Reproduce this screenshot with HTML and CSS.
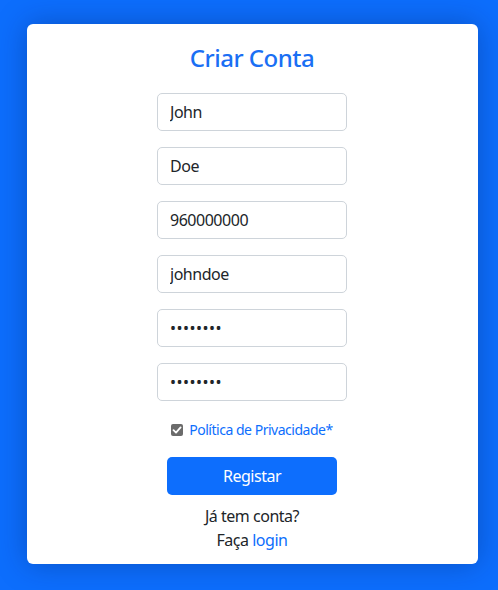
FILE: index.html
```html
<!DOCTYPE html>
<html lang="pt">
<head>
<meta charset="utf-8">
<title>Criar Conta</title>
<link rel="stylesheet" href="styles.css">
</head>
<body>
<main class="card">
  <h1 class="title">Criar Conta</h1>
  <form class="form">
    <input class="field" type="text" value="John">
    <input class="field" type="text" value="Doe">
    <input class="field" type="text" value="960000000">
    <input class="field" type="text" value="johndoe">
    <input class="field" type="password" value="12345678">
    <input class="field" type="password" value="12345678">
    <label class="check">
      <span class="box"><svg width="10" height="10" viewBox="0 0 10 10"><path d="M1.5 5.2 L4 7.6 L8.6 2.4" fill="none" stroke="#fff" stroke-width="1.8" stroke-linecap="round" stroke-linejoin="round"/></svg></span>
      <a class="link" href="#">Política de Privacidade*</a>
    </label>
    <button class="btn" type="button">Registar</button>
  </form>
  <p class="foot">Já tem conta?<br>Faça <a class="link" href="#">login</a></p>
</main>
</body>
</html>
```
FILE: styles.css
```css
html, body {
  margin: 0;
  padding: 0;
}
body {
  background: #0d6efd;
  font-family: "Noto Sans", "Segoe UI", sans-serif;
  letter-spacing: -0.03em;
  color: #212529;
  height: 590px;
  overflow: hidden;
  padding-top: 24px;
  box-sizing: border-box;
}
.card {
  width: 451px;
  margin: 0 0 0 27px;
  height: 540px;
  box-sizing: border-box;
  background: #fff;
  border-radius: 6px;
  box-shadow: 0 0 30px rgba(0, 30, 90, 0.35);
  padding: 19px 1px 0 0;
  display: flex;
  flex-direction: column;
  align-items: center;
}
.title {
  margin: 0;
  font-size: 24px;
  line-height: 29px;
  font-weight: 500;
  color: #1a6ff4;
}
.form {
  margin-top: 21px;
  display: flex;
  flex-direction: column;
  align-items: center;
}
.field {
  width: 190px;
  height: 38px;
  box-sizing: border-box;
  border: 1px solid #ced4da;
  border-radius: 5px;
  padding: 0 12px;
  font-family: inherit;
  font-size: 16px;
  letter-spacing: -0.03em;
  color: #212529;
  margin-bottom: 16px;
  outline: none;
}
.field[type="password"] {
  letter-spacing: 0.5px;
}
.check {
  margin-top: 2px;
  display: flex;
  align-items: center;
  gap: 6px;
  font-size: 14px;
  line-height: 21px;
}
.box {
  width: 12px;
  height: 12px;
  border-radius: 2px;
  background: #6b6b6b;
  display: flex;
  align-items: center;
  justify-content: center;
}
.link {
  color: #0d6efd;
  text-decoration: none;
}
.btn {
  margin-top: 17px;
  width: 170px;
  height: 38px;
  border: none;
  border-radius: 5px;
  background: #0d6efd;
  color: #fff;
  font-family: inherit;
  font-size: 16px;
  letter-spacing: -0.03em;
}
.foot {
  margin: 9px 0 0;
  font-size: 16px;
  line-height: 24px;
  text-align: center;
}
```
